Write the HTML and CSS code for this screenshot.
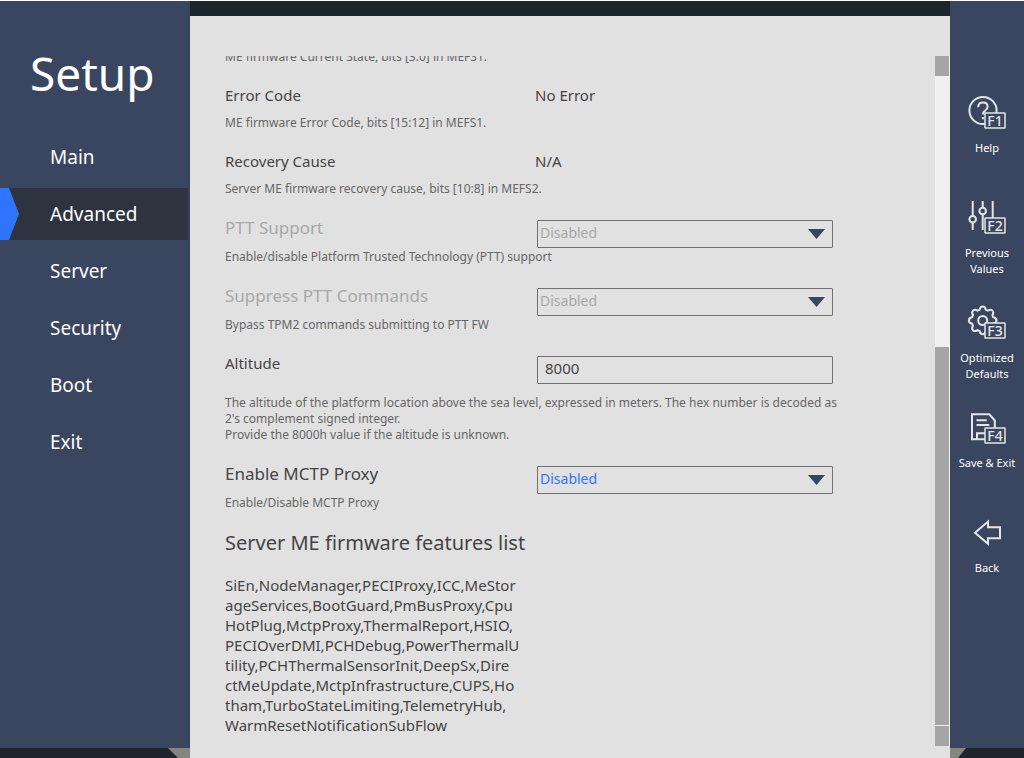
FILE: index.html
```html
<!DOCTYPE html>
<html lang="en">
<head>
<meta charset="utf-8">
<title>Setup</title>
<link rel="stylesheet" href="styles.css">
</head>
<body>
<div class="app">
  <aside class="sidebar">
    <h1 class="brand">Setup</h1>
    <nav class="menu">
      <a class="menu-item" href="#main">Main</a>
      <a class="menu-item active" href="#advanced" aria-current="page">Advanced</a>
      <a class="menu-item" href="#server">Server</a>
      <a class="menu-item" href="#security">Security</a>
      <a class="menu-item" href="#boot">Boot</a>
      <a class="menu-item" href="#exit">Exit</a>
    </nav>
  </aside>

  <main class="panel">
    <div class="viewport">
      <div class="settings">
        <p class="help">ME firmware Current State, bits [3:0] in MEFS1.</p>
        <section class="setting">
          <div class="row"><span class="label">Error Code</span><span class="value">No Error</span></div>
          <p class="help info">ME firmware Error Code, bits [15:12] in MEFS1.</p>
        </section>
        <section class="setting">
          <div class="row"><span class="label">Recovery Cause</span><span class="value">N/A</span></div>
          <p class="help info">Server ME firmware recovery cause, bits [10:8] in MEFS2.</p>
        </section>
        <section class="setting">
          <div class="row">
            <label class="label large muted" for="ptt">PTT Support</label>
            <div class="picker"><select id="ptt" class="field" disabled><option>Disabled</option><option>Enabled</option></select></div>
          </div>
          <p class="help">Enable/disable Platform Trusted Technology (PTT) support</p>
        </section>
        <section class="setting">
          <div class="row">
            <label class="label large muted" for="suppress">Suppress PTT Commands</label>
            <div class="picker"><select id="suppress" class="field" disabled><option>Disabled</option><option>Enabled</option></select></div>
          </div>
          <p class="help">Bypass TPM2 commands submitting to PTT FW</p>
        </section>
        <section class="setting">
          <div class="row">
            <label class="label" for="altitude">Altitude</label>
            <div class="picker plain"><input id="altitude" class="field number" type="text" value="8000"></div>
          </div>
          <p class="help spaced">The altitude of the platform location above the sea level, expressed in meters. The hex number is decoded as<br>2's complement signed integer.<br>Provide the 8000h value if the altitude is unknown.</p>
        </section>
        <section class="setting">
          <div class="row">
            <label class="label large" for="mctp">Enable MCTP Proxy</label>
            <div class="picker"><select id="mctp" class="field selected"><option>Disabled</option><option>Enabled</option></select></div>
          </div>
          <p class="help">Enable/Disable MCTP Proxy</p>
        </section>
        <h2 class="heading">Server ME firmware features list</h2>
        <p class="features">SiEn,NodeManager,PECIProxy,ICC,MeStor<br>ageServices,BootGuard,PmBusProxy,Cpu<br>HotPlug,MctpProxy,ThermalReport,HSIO,<br>PECIOverDMI,PCHDebug,PowerThermalU<br>tility,PCHThermalSensorInit,DeepSx,Dire<br>ctMeUpdate,MctpInfrastructure,CUPS,Ho<br>tham,TurboStateLimiting,TelemetryHub,<br>WarmResetNotificationSubFlow</p>
      </div>
    </div>
    <div class="scrollbar" aria-hidden="true">
      <div class="scroll-up"></div>
      <div class="scroll-track"><div class="scroll-thumb"></div></div>
      <div class="scroll-down"></div>
    </div>
  </main>

  <aside class="actions">
    <button class="action" type="button">
      <svg class="icon" viewBox="0 0 42 40" aria-hidden="true">
        <circle cx="17" cy="17.5" r="13.6"/>
        <path d="M12.2 14.2c0-3 2-4.6 4.7-4.6s4.7 1.6 4.7 4.2c0 2.3-1.6 3.2-3 4.3-1.2.9-1.7 1.6-1.7 3.4M16.9 24v2.2"/>
        <rect class="badge" x="19" y="20" width="20" height="15" rx="0.5"/>
        <text class="key" x="29" y="33">F1</text>
      </svg>
      <span>Help</span>
    </button>
    <button class="action" type="button">
      <svg class="icon" viewBox="0 0 42 40" aria-hidden="true">
        <path d="M6.7 3v15M6.7 24.6V32M16.7 3v6.7M16.7 16.3V32M26.7 3v17"/>
        <circle cx="6.7" cy="21.3" r="3.3"/>
        <circle cx="16.7" cy="13" r="3.3"/>
        <rect class="badge" x="19" y="20" width="20" height="15" rx="0.5"/>
        <text class="key" x="29" y="33">F2</text>
      </svg>
      <span>Previous<br>Values</span>
    </button>
    <button class="action" type="button">
      <svg class="icon" viewBox="0 0 42 40" aria-hidden="true">
        <path d="M13.6 6.8Q14.2 3.6 16.7 3.6T19.8 6.8L21.9 7.7Q24.6 5.8 26.4 7.6T26.4 12.1L27.3 14.3Q30.5 15 30.5 17.4T27.3 20.6L26.4 22.8Q28.2 25.4 26.4 27.2T21.9 27.1L19.8 28Q19.2 31.2 16.7 31.2T13.6 28L11.5 27.1Q8.8 29 7 27.2T7 22.8L6.1 20.6Q2.9 20 2.9 17.4T6.1 14.3L7 12.1Q5.2 9.4 7 7.6T11.5 7.7Z"/>
        <circle cx="16.7" cy="17.5" r="4.5"/>
        <rect class="badge" x="19" y="20" width="20" height="15" rx="0.5"/>
        <text class="key" x="29" y="33">F3</text>
      </svg>
      <span>Optimized<br>Defaults</span>
    </button>
    <button class="action" type="button">
      <svg class="icon" viewBox="0 0 42 40" aria-hidden="true">
        <path d="M20 31.3H6V6.3H23.3L28.8 12.5V21M10.5 12.3H20.7M10.5 17H23.3M11 31V25.3H20"/>
        <rect class="badge" x="19" y="20" width="20" height="15" rx="0.5"/>
        <text class="key" x="29" y="33">F4</text>
      </svg>
      <span>Save &amp; Exit</span>
    </button>
    <button class="action" type="button">
      <svg class="icon" viewBox="0 0 42 40" aria-hidden="true">
        <path d="M9 19.7L22 8.6V14.2H34V25.3H22V30.8Z"/>
      </svg>
      <span>Back</span>
    </button>
  </aside>
  <div class="foot foot-left"></div>
  <div class="foot foot-right"></div>
</div>
</body>
</html>
```
FILE: styles.css
```css
* { box-sizing: border-box; }

body {
  margin: 0;
  background: #fff;
  color: #444;
  font-family: "Noto Sans", "Open Sans", sans-serif;
  font-size: 15px;
  line-height: 20px;
}

h1, h2, p { margin: 0; font-weight: 400; }

.app {
  display: grid;
  grid-template-columns: 190px minmax(0, 1fr) 74px;
  grid-template-rows: minmax(0, 1fr) 10px;
  height: 100vh;
  padding-top: 1px;
}

/* Left navigation */
.sidebar {
  background: #3a465f;
  border-right: 2px solid #37425f;
  color: #fff;
}

.brand {
  margin: 41px 0 27px 30px;
  font-size: 46px;
  line-height: 62px;
}

.menu { display: flex; flex-direction: column; gap: 5px; }

.menu-item {
  position: relative;
  padding-left: 50px;
  color: #fff;
  font-size: 19px;
  line-height: 52px;
  text-decoration: none;
}

.menu-item.active { background: #2d343f; }

.menu-item.active::before {
  content: "";
  position: absolute;
  inset: 0 auto 0 0;
  width: 19px;
  background: #2f74ff;
  clip-path: polygon(0 0, 9px 0, 100% 50%, 9px 100%, 0 100%);
}

/* Settings panel */
.panel {
  grid-row: 1 / 3;
  grid-column: 2;
  display: flex;
  padding: 40px 0 12px 35px;
  border-top: 15px solid #1e262d;
  background: #e1e1e1;
}

.viewport { flex: 1; min-width: 0; overflow: hidden; }

.settings {
  display: flex;
  flex-direction: column;
  gap: 21px;
  margin-top: -7px;
}

.row { display: flex; align-items: flex-start; line-height: 18px; }

.label { width: 310px; flex: none; }
.label.large { font-size: 17px; line-height: 20px; }
.label.muted { color: #a8a8a8; }

.help {
  margin-top: 1px;
  color: #666;
  font-size: 12px;
  line-height: 16px;
}

.settings > .help { margin-top: 0; }
.help.info { margin-top: 11px; }
.help.spaced { margin-top: 11px; }

.picker {
  position: relative;
  width: 296px;
  margin: 2px 0 0 2px;
}

.picker:not(.plain)::after {
  content: "";
  position: absolute;
  top: 9px;
  right: 8px;
  width: 17px;
  height: 10px;
  background: #3a465f;
  clip-path: polygon(0 0, 100% 0, 50% 100%);
  pointer-events: none;
}

.field {
  display: block;
  width: 100%;
  height: 28px;
  padding: 0 2px 2px;
  border: 1px solid #707070;
  border-radius: 1px;
  outline: 0;
  background: transparent;
  color: #444;
  font: inherit;
  font-size: 14px;
  appearance: none;
}

.field:disabled { color: #a8a8a8; opacity: 1; }
.field.selected { color: #2f74ff; }
.field.number { padding: 0 7px 4px; font-size: 15px; }

.heading {
  margin-top: -3px;
  font-size: 20px;
  line-height: 28px;
}

.features { margin-top: -3px; white-space: nowrap; }

.scrollbar {
  display: flex;
  flex-direction: column;
  width: 15px;
  border-right: 1px solid #f0f0f0;
}

.scroll-up, .scroll-down { height: 20px; background: #a5a5a5; }
.scroll-track { flex: 1; border-bottom: 1px solid #f0f0f0; background: #a5a5a5; }
.scroll-thumb { height: 271px; background: #f0f0f0; }

/* Function key actions */
.actions {
  grid-column: 3;
  display: grid;
  grid-auto-rows: 105px;
  align-content: start;
  padding-top: 92px;
  background: #3a465f;
}

.action {
  display: flex;
  flex-direction: column;
  align-items: center;
  gap: 7px;
  padding: 0;
  border: 0;
  background: transparent;
  color: #fff;
  font: inherit;
  font-size: 11px;
  line-height: 16px;
  white-space: nowrap;
}

.icon {
  width: 42px;
  height: 40px;
  fill: none;
  stroke: #e4e6e6;
  stroke-width: 2;
}

.badge { fill: #3a465f; stroke-width: 1.5; }

.key {
  fill: #e4e6e6;
  stroke: none;
  font-size: 14px;
  font-weight: 500;
  text-anchor: middle;
}

/* Base strip below the side bars */
.foot { grid-row: 2; display: flex; background: #1e262d; }
.foot-left { grid-column: 1; justify-content: flex-end; }
.foot-right { grid-column: 3; }
.foot::before { content: ""; background: #84857f; }
.foot-left::before { width: 22px; clip-path: polygon(0 0, 100% 0, 100% 100%, 10px 100%); }
.foot-right::before { width: 16px; clip-path: polygon(0 0, 100% 0, 8px 100%, 0 100%); }
```
